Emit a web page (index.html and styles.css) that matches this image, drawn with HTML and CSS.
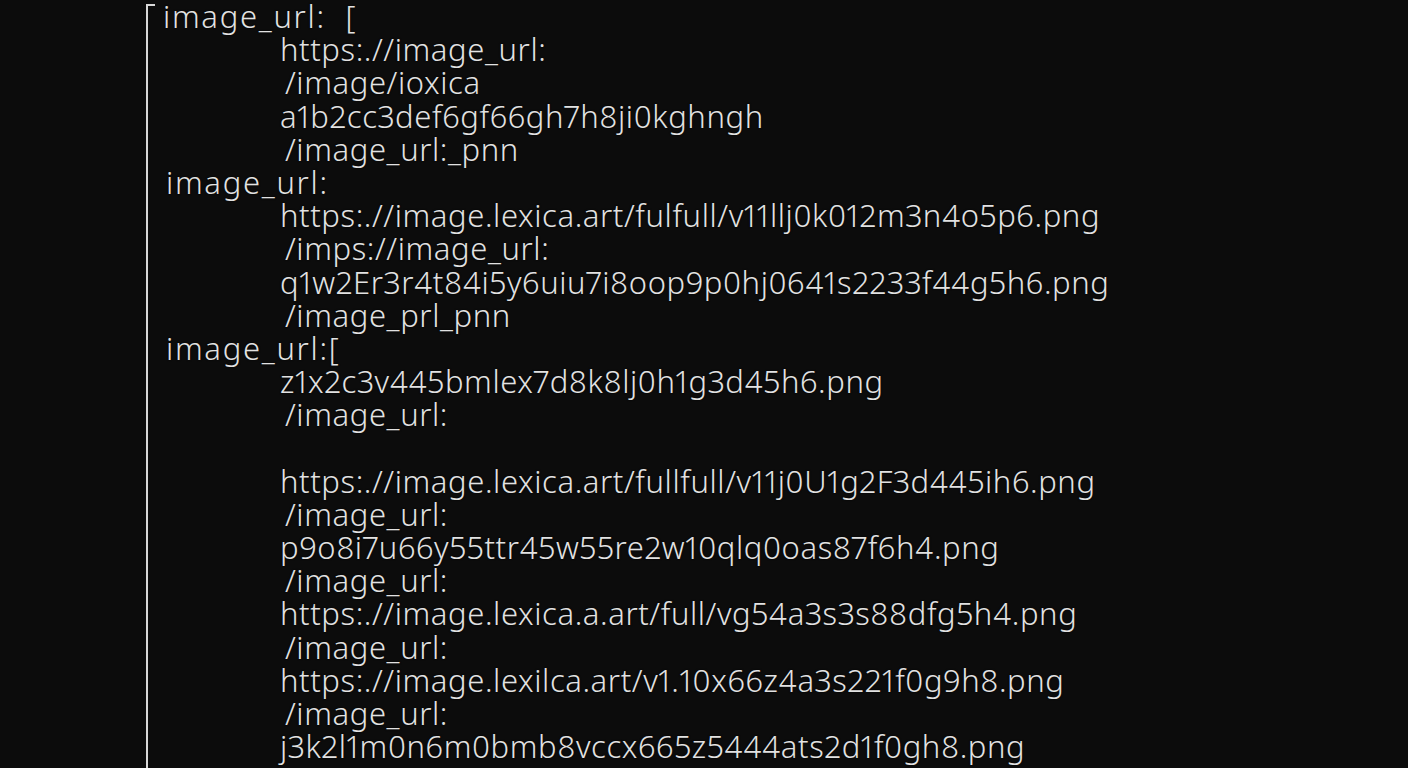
FILE: index.html
```html
<!DOCTYPE html>
<html lang="en">
<head>
    <meta charset="UTF-8">
    <meta name="viewport" content="width=device-width, initial-scale=1.0">
    <title>image_url dump</title>
    <link rel="stylesheet" href="styles.css">
</head>
<body>
    <div class="listing">
        <div class="line key first">image_url: [</div>
        <div class="line val">https:.//image_url:</div>
        <div class="line path">/image/ioxica</div>
        <div class="line val">a1b2cc3def6gf66gh7h8ji0kghngh</div>
        <div class="line path">/image_url:_pnn</div>

        <div class="line key">image_url:</div>
        <div class="line val">https:.//image.lexica.art/fulfull/v11llj0k012m3n4o5p6.png</div>
        <div class="line path">/imps://image_url:</div>
        <div class="line val">q1w2Er3r4t84i5y6uiu7i8oop9p0hj0641s2233f44g5h6.png</div>
        <div class="line path">/image_prl_pnn</div>

        <div class="line key">image_url:[</div>
        <div class="line val">z1x2c3v445bmlex7d8k8lj0h1g3d45h6.png</div>
        <div class="line path">/image_url:</div>
        <div class="line blank"></div>
        <div class="line val">https:.//image.lexica.art/fullfull/v11j0U1g2F3d445ih6.png</div>
        <div class="line path">/image_url:</div>
        <div class="line val">p9o8i7u66y55ttr45w55re2w10qlq0oas87f6h4.png</div>
        <div class="line path">/image_url:</div>
        <div class="line val">https:.//image.lexica.a.art/full/vg54a3s3s88dfg5h4.png</div>
        <div class="line path">/image_url:</div>
        <div class="line val">https:.//image.lexilca.art/v1.10x66z4a3s221f0g9h8.png</div>
        <div class="line path">/image_url:</div>
        <div class="line val">j3k2l1m0n6m0bmb8vccx665z5444ats2d1f0gh8.png</div>
    </div>
</body>
</html>
```

FILE: styles.css
```css
html, body {
    height: 100%;
}

body {
    margin: 0;
    background: #0c0c0c;
    color: #e2e2e2;
    font-family: "Noto Sans", "Open Sans", sans-serif;
    font-weight: 300;
    overflow: hidden;
}

.listing {
    position: relative;
    margin-left: 146px;
    min-height: 100%;
    padding-left: 20px;
    display: flex;
    flex-direction: column;
}

/* the open bracket down the left side */
.listing::before {
    content: '';
    position: absolute;
    left: 0;
    top: 4px;
    bottom: 0;
    width: 9px;
    border-top: 2px solid #d8d8d8;
    border-left: 2px solid #d8d8d8;
    box-sizing: border-box;
}

.line {
    font-size: 31px;
    line-height: 33.2px;
    height: 33.2px;
    letter-spacing: 0.6px;
    font-variant-numeric: proportional-nums;
    white-space: pre;
    text-shadow: 0 0 2px rgba(0, 0, 0, 0.9);
}

.key {
    letter-spacing: 1.7px;
}

.key.first {
    margin-left: -3px;
    word-spacing: 10px;
}

.val {
    padding-left: 114px;
}

.path {
    padding-left: 119px;
}
```
